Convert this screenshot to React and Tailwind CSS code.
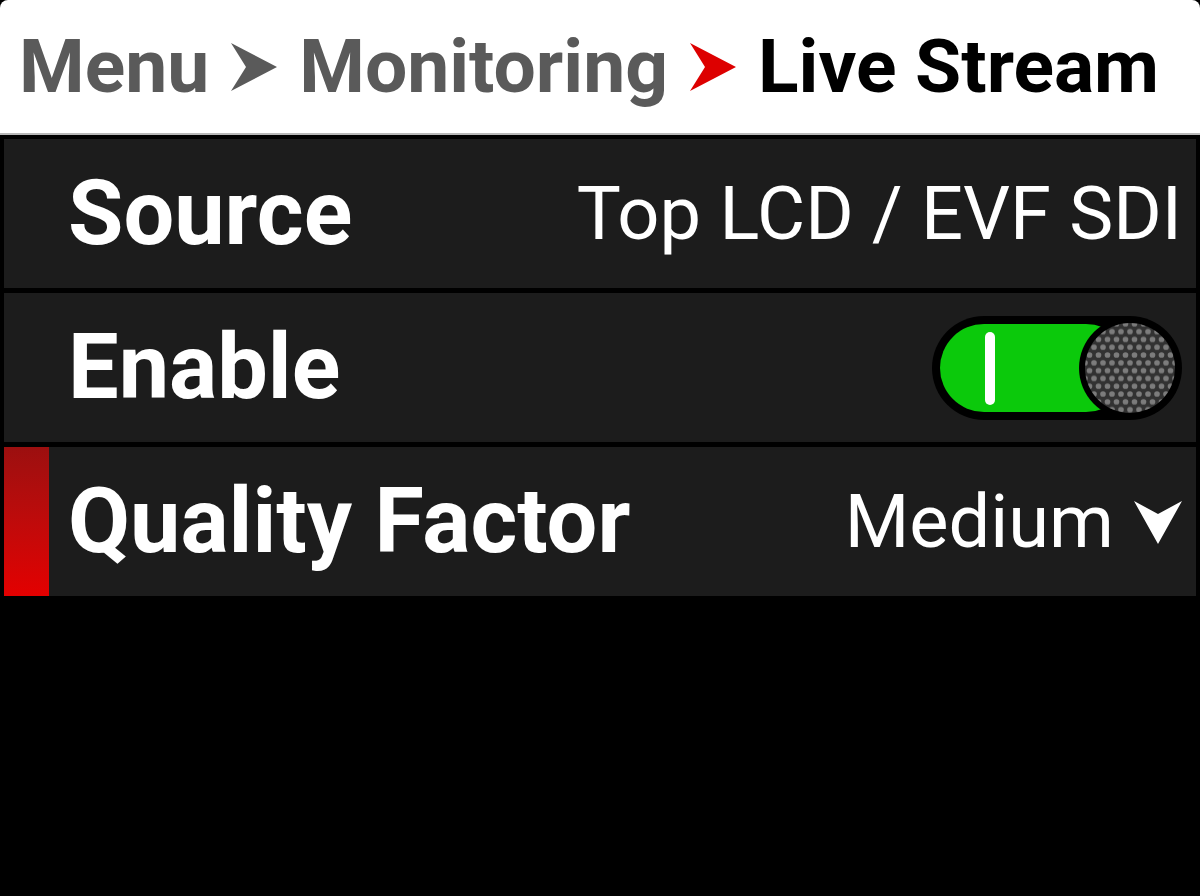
const font = { fontFamily: "Roboto, 'Liberation Sans', sans-serif" };

function Crumb({ color }) {
  return (
    <svg width="46" height="48" viewBox="0 0 46 48" className="shrink-0">
      <path d="M0 0 L46 24 L0 48 L15 24 Z" fill={color} />
    </svg>
  );
}

function Toggle() {
  return (
    <svg width="250" height="104" viewBox="0 0 250 104">
      <defs>
        <pattern id="dots" width="9" height="15.6" patternUnits="userSpaceOnUse">
          <rect width="9" height="15.6" fill="#323232" />
          <circle cx="0" cy="0" r="2.8" fill="#7c7c7c" />
          <circle cx="9" cy="0" r="2.8" fill="#7c7c7c" />
          <circle cx="4.5" cy="7.8" r="2.8" fill="#7c7c7c" />
          <circle cx="0" cy="15.6" r="2.8" fill="#7c7c7c" />
          <circle cx="9" cy="15.6" r="2.8" fill="#7c7c7c" />
        </pattern>
      </defs>
      <rect x="0" y="0" width="250" height="104" rx="52" fill="#000" />
      <rect x="8" y="8" width="190" height="88" rx="44" fill="#0bc90b" />
      <rect x="53" y="16" width="10" height="73" rx="5" fill="#fff" />
      <circle cx="198" cy="52" r="51" fill="#000" />
      <circle cx="198" cy="52" r="45" fill="url(#dots)" />
    </svg>
  );
}

function Row({ label, selected, children }) {
  return (
    <div className="flex h-[149px] bg-[#1c1c1c]">
      <div
        className={
          selected
            ? "w-[45px] shrink-0 bg-gradient-to-b from-[#9c0f0f] to-[#e30000]"
            : "w-[45px] shrink-0"
        }
      />
      <div className="flex flex-1 items-center justify-between pl-[19px] pr-[14px]">
        <span className="text-[90px] font-bold leading-none text-white">{label}</span>
        {children}
      </div>
    </div>
  );
}

export default function App() {
  return (
    <div className="w-[1200px] h-[896px] bg-black overflow-hidden" style={font}>
      <header className="h-[133px] bg-white rounded-t-[8px] flex items-center pl-[19px] gap-[22px] border-b-2 border-[#b8b8b8] box-content">
        <span className="text-[75px] font-bold leading-none text-[#5a5a5a]">Menu</span>
        <Crumb color="#5a5a5a" />
        <span className="text-[75px] font-bold leading-none text-[#5a5a5a]">Monitoring</span>
        <Crumb color="#dd0000" />
        <span className="text-[75px] font-bold leading-none text-black">Live Stream</span>
      </header>

      <div className="flex flex-col gap-[5px] px-[4px] pt-[4px]">
        <Row label="Source">
          <span className="text-[74px] leading-none text-white">Top LCD / EVF SDI</span>
        </Row>
        <Row label="Enable">
          <Toggle />
        </Row>
        <Row label="Quality Factor" selected>
          <div className="flex items-center gap-[20px]">
            <span className="text-[74px] leading-none text-white">Medium</span>
            <svg width="48" height="46" viewBox="0 0 48 46">
              <path d="M0 2 L24 45 L48 2 L24 15 Z" fill="#fff" />
            </svg>
          </div>
        </Row>
      </div>
    </div>
  );
}
